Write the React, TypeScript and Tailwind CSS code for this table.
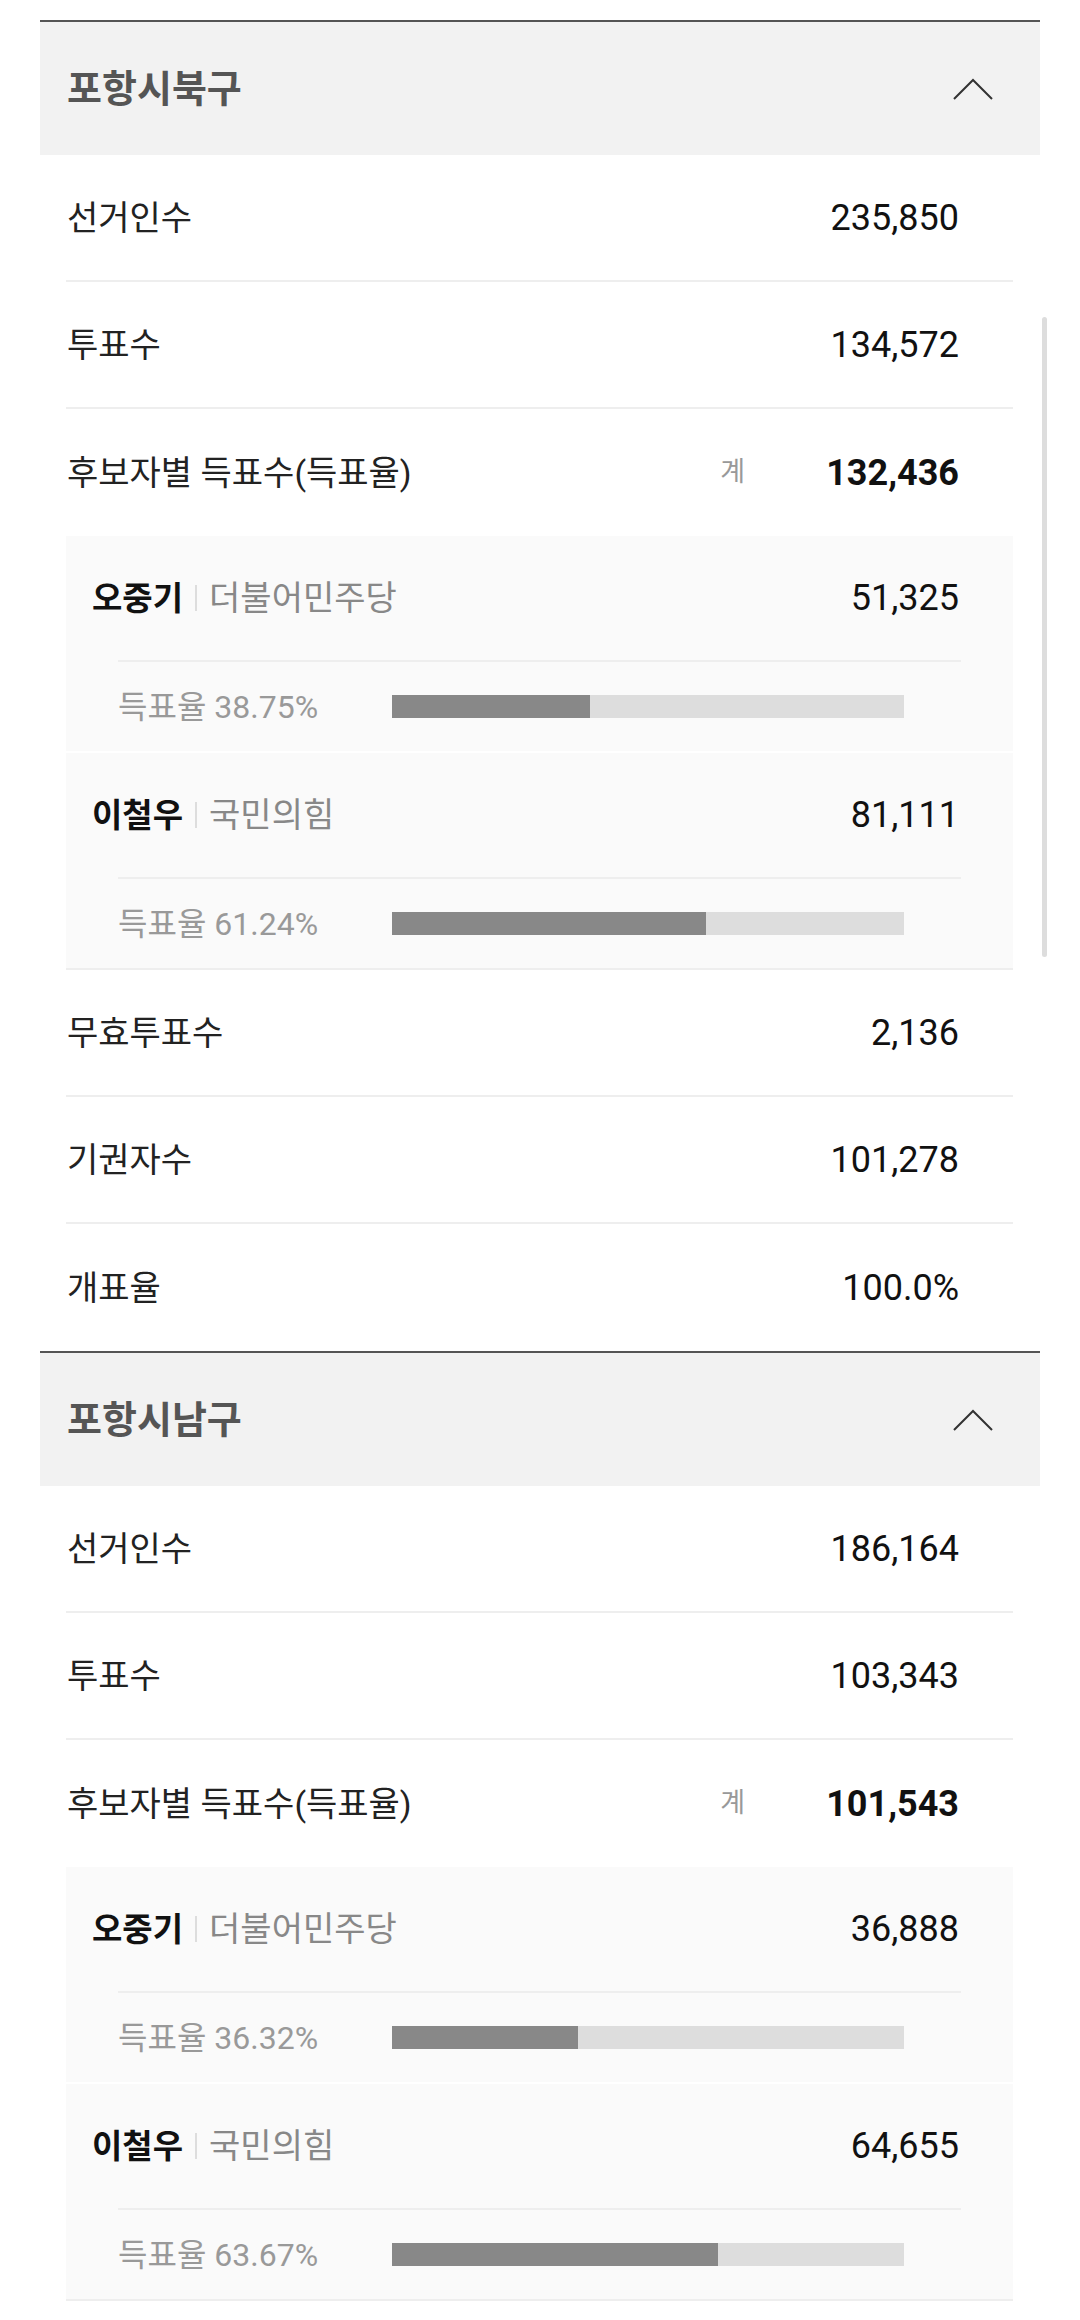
import React from 'react'

type Candidate = { name: string; party: string; votes: string; pct: number }
type District = {
  name: string
  electors: string
  turnout: string
  total: string
  candidates: Candidate[]
  invalid: string
  abstain: string
  counted: string
}

const districts: District[] = [
  {
    name: '포항시북구',
    electors: '235,850',
    turnout: '134,572',
    total: '132,436',
    candidates: [
      { name: '오중기', party: '더불어민주당', votes: '51,325', pct: 38.75 },
      { name: '이철우', party: '국민의힘', votes: '81,111', pct: 61.24 },
    ],
    invalid: '2,136',
    abstain: '101,278',
    counted: '100.0%',
  },
  {
    name: '포항시남구',
    electors: '186,164',
    turnout: '103,343',
    total: '101,543',
    candidates: [
      { name: '오중기', party: '더불어민주당', votes: '36,888', pct: 36.32 },
      { name: '이철우', party: '국민의힘', votes: '64,655', pct: 63.67 },
    ],
    invalid: '',
    abstain: '',
    counted: '',
  },
]

const font = { fontFamily: "Roboto, 'Noto Sans CJK KR', sans-serif" }

function Row({ label, value, last }: { label: string; value: string; last?: boolean }) {
  return (
    <div
      className={`h-[127px] flex items-center justify-between pl-[1px] pr-[54px] ${
        last ? '' : 'border-b-2 border-[#eeeeee]'
      }`}
    >
      <span className="text-[34px] leading-none text-[#222]">{label}</span>
      <span className="text-[36px] leading-none text-[#111]">{value}</span>
    </div>
  )
}

function CandidateBlock({ c, last }: { c: Candidate; last: boolean }) {
  return (
    <div
      className={`h-[217px] bg-[#fafafa] flex flex-col border-b-2 ${
        last ? 'border-[#eeeeee]' : 'border-white'
      }`}
    >
      <div className="h-[124px] flex items-center justify-between pl-[26px] pr-[54px]">
        <div className="flex items-center">
          <span className="text-[33px] leading-none font-bold text-[#111]">{c.name}</span>
          <span className="w-[2px] h-[26px] bg-[#dddddd] mx-[12px]" />
          <span className="text-[34px] leading-none text-[#888]">{c.party}</span>
        </div>
        <span className="text-[36px] leading-none text-[#111]">{c.votes}</span>
      </div>
      <div className="mx-[52px] h-[2px] bg-[#eeeeee]" />
      <div className="flex-1 flex items-center pl-[52px]">
        <span className="w-[274px] text-[32px] leading-none text-[#999]">
          득표율 {c.pct.toFixed(2)}%
        </span>
        <div className="w-[512px] h-[23px] bg-[#dddddd]">
          <div className="h-full bg-[#888888]" style={{ width: `${c.pct}%` }} />
        </div>
      </div>
    </div>
  )
}

function Section({ d }: { d: District }) {
  return (
    <section className="border-t-2 border-[#555]">
      <div className="h-[133px] bg-[#f2f2f2] flex items-center justify-between pl-[27px] pr-[47px]">
        <h2 className="text-[38px] leading-none font-bold text-[#555]">{d.name}</h2>
        <svg width="40" height="22" viewBox="0 0 40 22" fill="none">
          <path d="M1 21 L20 2 L39 21" stroke="#333" strokeWidth="2" />
        </svg>
      </div>
      <div className="ml-[26px] mr-[27px]">
        <Row label="선거인수" value={d.electors} />
        <Row label="투표수" value={d.turnout} />
        <div className="h-[127px] flex items-center justify-between pl-[1px] pr-[54px]">
          <span className="text-[34px] leading-none text-[#222]">후보자별 득표수(득표율)</span>
          <div className="flex items-center">
            <span className="text-[27px] leading-none text-[#999]">계</span>
            <span className="w-[214px] text-right text-[36px] leading-none font-bold text-[#111]">
              {d.total}
            </span>
          </div>
        </div>
        {d.candidates.map((c, i) => (
          <CandidateBlock key={c.name} c={c} last={i === d.candidates.length - 1} />
        ))}
        {d.invalid && <Row label="무효투표수" value={d.invalid} />}
        {d.abstain && <Row label="기권자수" value={d.abstain} />}
        {d.counted && <Row label="개표율" value={d.counted} last />}
      </div>
    </section>
  )
}

export default function App() {
  return (
    <div className="relative w-[1080px] h-[2320px] overflow-hidden bg-white pt-[20px] px-[40px]" style={font}>
      {districts.map((d) => (
        <Section key={d.name} d={d} />
      ))}
      {/* scrollbar thumb */}
      <div className="absolute left-[1042px] top-[317px] w-[5px] h-[640px] rounded-full bg-[#dddddd]" />
    </div>
  )
}
